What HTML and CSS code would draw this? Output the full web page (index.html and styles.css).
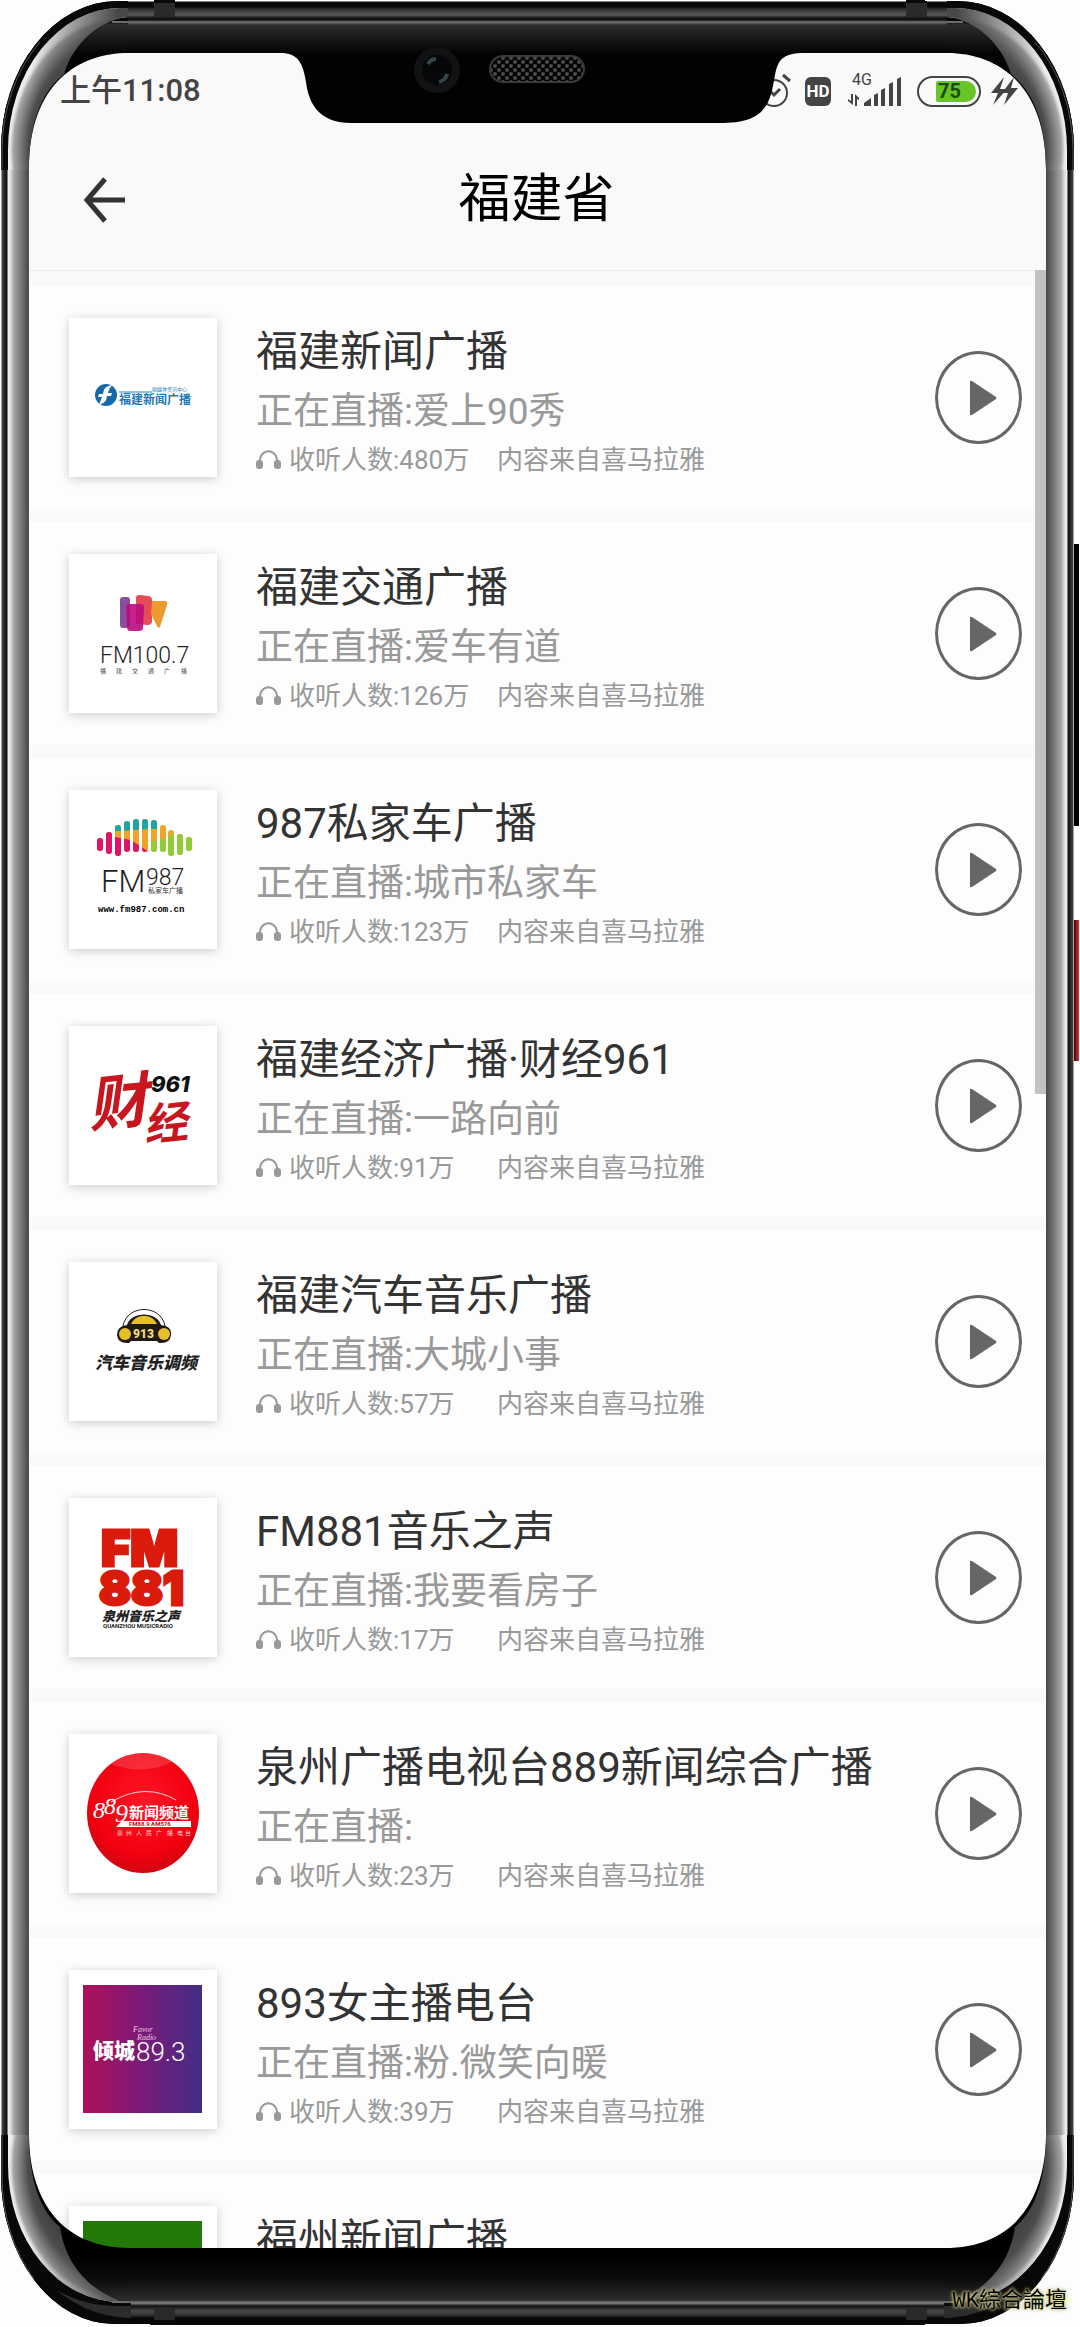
FILE: index.html
```html
<!DOCTYPE html>
<html lang="zh-CN">
<head>
    <meta charset="UTF-8">
    <meta name="viewport" content="width=device-width, initial-scale=1.0">
    <title>福建省</title>
    <link rel="stylesheet" href="styles.css">
</head>
<body>
    <!-- общие иконки -->
    <svg class="defs" width="0" height="0" aria-hidden="true">
        <defs>
            <radialGradient id="rail-top" gradientUnits="userSpaceOnUse" cx="0" cy="0" r="1" gradientTransform="translate(120 150) scale(112 135)">
                <stop offset="0.5" stop-color="#222"/>
                <stop offset="0.82" stop-color="#4c4c4c"/>
                <stop offset="0.95" stop-color="#a4a4a4"/>
                <stop offset="0.98" stop-color="#e4e4e4"/>
                <stop offset="1" stop-color="#f0f0f0"/>
            </radialGradient>
            <radialGradient id="rail-bottom" gradientUnits="userSpaceOnUse" cx="0" cy="0" r="1" gradientTransform="translate(120 30) scale(112 137)">
                <stop offset="0.5" stop-color="#222"/>
                <stop offset="0.82" stop-color="#4c4c4c"/>
                <stop offset="0.95" stop-color="#a4a4a4"/>
                <stop offset="0.98" stop-color="#e4e4e4"/>
                <stop offset="1" stop-color="#f0f0f0"/>
            </radialGradient>
            <linearGradient id="fade" gradientUnits="userSpaceOnUse" x1="30" y1="0" x2="118" y2="0">
                <stop offset="0" stop-color="#484848" stop-opacity="0"/>
                <stop offset="1" stop-color="#484848"/>
            </linearGradient>
            <linearGradient id="glass-top" gradientUnits="userSpaceOnUse" x1="0" y1="0" x2="0" y2="53">
                <stop offset="0.38" stop-color="#080808"/>
                <stop offset="0.47" stop-color="#2c2c2c"/>
                <stop offset="1" stop-color="#050505"/>
            </linearGradient>
            <linearGradient id="glass-bottom" gradientUnits="userSpaceOnUse" x1="0" y1="113" x2="0" y2="190">
                <stop offset="0.1" stop-color="#000"/>
                <stop offset="0.39" stop-color="#0a0a0a"/>
                <stop offset="0.68" stop-color="#2c2c2c"/>
                <stop offset="0.73" stop-color="#080808"/>
            </linearGradient>
            <linearGradient id="sunset">
                <stop offset="0" stop-color="#ad1159"/>
                <stop offset="0.5" stop-color="#7a1a79"/>
                <stop offset="1" stop-color="#422e86"/>
            </linearGradient>
            <radialGradient id="ball" cx="0.5" cy="0.4" r="0.65">
                <stop offset="0" stop-color="#ff1626"/>
                <stop offset="0.7" stop-color="#f2000f"/>
                <stop offset="1" stop-color="#c40812"/>
            </radialGradient>
        </defs>
        <symbol id="corner-top" viewBox="0 0 150 170">
            <path fill="#fdfdfd" d="M0 0H150V1H118A117 149 0 0 0 1 150V170H0Z"/>
            <path fill="url(#glass-top)" d="M128 1H118A117 149 0 0 0 1 150V170H29C29 82 80 53 128 53Z"/>
            <path fill="#080808" d="M118 1A117 149 0 0 0 1 150V170H8V150A112 135 0 0 1 120 15Z"/>
            <g id="crescent-top">
                <path fill="url(#rail-top)" d="M8 170V150A112 142 0 0 1 120 8H128V17C104 18 74 40 64 74C44 90 29 118 29 170Z"/>
                <path fill="url(#fade)" d="M8 170V150A112 142 0 0 1 120 8H128V17C104 18 74 40 64 74C44 90 29 118 29 170Z"/>
            </g>
            <path fill="none" stroke="#555" d="M2 170V150A116 148 0 0 1 40 42"/>
            <path fill="none" stroke="#6b6b6b" stroke-width="2" d="M128 22H112"/>
        </symbol>
        <symbol id="corner-bottom" viewBox="0 0 150 190">
            <path fill="#fdfdfd" d="M0 190H150V189H115A114 149 0 0 1 1 40V0H0Z"/>
            <path fill="url(#glass-bottom)" d="M131 189H115A114 149 0 0 1 1 40V0H29C29 50 50 113 131 113Z"/>
            <path fill="#080808" d="M115 189A114 149 0 0 1 1 40V0H8V30A112 137 0 0 0 120 167L131 171V189Z"/>
            <path fill="url(#rail-bottom)" d="M8 0V30A112 137 0 0 0 120 167C90 154 66 132 60 92C38 74 29 40 29 0Z"/>
            <path fill="url(#fade)" d="M8 0V30A112 137 0 0 0 120 167C90 154 66 132 60 92C38 74 29 40 29 0Z"/>
            <path fill="#2c2c2c" d="M131 171V183C100 182 78 172 56 155C80 168 100 172 131 171Z"/>
            <path fill="none" stroke="#555" d="M2 0V40A113 148 0 0 0 34 144"/>
            <path fill="none" stroke="#6b6b6b" stroke-width="2" d="M131 167H112"/>
        </symbol>
        <symbol id="headphones" viewBox="0 0 25 20">
            <path fill="none" stroke="#999" stroke-width="2" d="M4 14C2 -3 23 -3 21 14"/>
            <rect x="0" y="10" width="7" height="9" rx="3" fill="#999"/>
            <rect x="18" y="10" width="7" height="9" rx="3" fill="#999"/>
        </symbol>
        <symbol id="play" viewBox="0 0 28 36">
            <path fill="#666" d="M1 2Q1 0 3 1L27 17Q28 18 27 19L3 35Q1 36 1 34Z"/>
        </symbol>
    </svg>

    <div class="phone">
        <main class="screen">
            <div class="status-bar">
                <span class="time">上午11:08</span>
                <div class="status-icons">
                    <svg width="32" height="36" viewBox="0 0 32 36" fill="none" stroke="#444" stroke-width="2">
                        <circle cx="14" cy="20" r="13"/>
                        <path d="M8 16L14 22L20 16M23 2L30 8" stroke-width="3"/>
                    </svg>
                    <span class="hd">HD</span>
                    <div class="signal">
                        <span>4G</span>
                        <svg width="54" height="30" viewBox="0 0 54 30" fill="#444">
                            <path d="M3 18H5V29L0 25V23L3 25ZM7 30V18L11 22V24L9 23V30ZM16 30V27L23 22V30ZM26 30V19L30 17V30ZM33 30V14L37 12V30ZM41 30V8L45 6V30ZM49 30V3L53 1V30Z"/>
                        </svg>
                    </div>
                    <div class="battery"><span>75</span></div>
                    <svg width="28" height="28" viewBox="0 0 28 28" fill="#444">
                        <path d="M14 0L1 16H8L3 28L17 12H10ZM24 0L12 16H18L14 28L28 11H21Z"/>
                    </svg>
                </div>
            </div>

            <header class="header">
                <button class="back" aria-label="返回">
                    <svg width="42" height="46" viewBox="0 0 42 46" fill="none" stroke="#333" stroke-width="5">
                        <path d="M22 2L4 23L22 44M4 23H42"/>
                    </svg>
                </button>
                <h1>福建省</h1>
            </header>

            <ul class="list">
                <li class="station">
                    <svg class="cover" viewBox="0 0 148 159">
                        <ellipse cx="37" cy="77" rx="11" ry="11" fill="#1768a8"/>
                        <path fill="#fff" d="M44 67C34 68 35 73 34 76H30L29 79H33L30 87C39 84 37 80 38 78H42L43 75H39C40 71 41 69 44 67Z"/>
                        <text x="83" y="73" font-size="5" fill="#2b83bd">融媒体资讯中心</text>
                        <path stroke="#2b83bd" d="M50 74H83"/>
                        <text x="50" y="86" font-size="12" font-weight="700" fill="#1c78b6">福建新闻广播</text>
                    </svg>
                    <div class="info">
                        <h2>福建新闻广播</h2>
                        <p class="live">正在直播:爱上90秀</p>
                        <p class="meta"><svg width="25" height="20"><use href="#headphones"/></svg><span>收听人数:480万</span><span>内容来自喜马拉雅</span></p>
                    </div>
                    <button class="play" aria-label="播放"><svg width="28" height="36"><use href="#play"/></svg></button>
                </li>
                <li class="station">
                    <svg class="cover" viewBox="0 0 148 159">
                        <rect x="51" y="43" width="10" height="31" rx="3" fill="#85519c"/>
                        <path fill="#e64c58" d="M67 44Q67 41 70 41L80 42Q83 43 83 46V68Q82 71 79 71L67 70Z"/>
                        <path fill="#bd0a7e" fill-opacity="0.9" d="M57 53Q57 50 61 50H71Q75 50 75 53L74 74Q74 77 70 77H61Q58 77 58 73Z"/>
                        <path fill="#ec9a2d" d="M83 47H96Q99 47 98 51L91 73Q89 75 88 72L82 60Z"/>
                        <text x="31" y="109" font-size="23" font-weight="300" fill="#222">FM100.7</text>
                        <text x="31 47 63 79 95 112" y="119" font-size="6" fill="#444">福建交通广播</text>
                    </svg>
                    <div class="info">
                        <h2>福建交通广播</h2>
                        <p class="live">正在直播:爱车有道</p>
                        <p class="meta"><svg width="25" height="20"><use href="#headphones"/></svg><span>收听人数:126万</span><span>内容来自喜马拉雅</span></p>
                    </div>
                    <button class="play" aria-label="播放"><svg width="28" height="36"><use href="#play"/></svg></button>
                </li>
                <li class="station">
                    <svg class="cover" viewBox="0 0 148 159">
                        <clipPath id="bars">
                            <rect x="28" y="48" width="6" height="13" rx="3"/>
                            <rect x="37" y="42" width="6" height="22" rx="3"/>
                            <rect x="46" y="35" width="6" height="31" rx="3"/>
                            <rect x="55" y="31" width="6" height="31" rx="3"/>
                            <rect x="64" y="29" width="6" height="33" rx="3"/>
                            <rect x="73" y="29" width="6" height="33" rx="3"/>
                            <rect x="82" y="30" width="6" height="32" rx="3"/>
                            <rect x="91" y="35" width="6" height="27" rx="3"/>
                            <rect x="99" y="40" width="6" height="26" rx="3"/>
                            <rect x="108" y="44" width="6" height="21" rx="3"/>
                            <rect x="117" y="47" width="6" height="14" rx="3"/>
                        </clipPath>
                        <g clip-path="url(#bars)">
                            <rect x="28" y="28" width="96" height="40" fill="#f0a325"/>
                            <path fill="#1ba5a5" d="M45 28H90V39H80L50 41H45Z"/>
                            <path fill="#dd1469" d="M28 40H44L46 47L62 50L80 62V68H28Z"/>
                            <path fill="#91cb37" d="M81 52L98 48L107 42H124V68H81Z"/>
                        </g>
                        <text x="32" y="102" font-size="31" font-weight="300" fill="#222">FM</text>
                        <text x="77" y="95" font-size="23" font-weight="300" fill="#222">987</text>
                        <text x="79" y="103" font-size="7" fill="#333">私家车广播</text>
                        <text x="29" y="122" font-size="9" font-weight="700" font-family="Liberation Mono, monospace">www.fm987.com.cn</text>
                    </svg>
                    <div class="info">
                        <h2>987私家车广播</h2>
                        <p class="live">正在直播:城市私家车</p>
                        <p class="meta"><svg width="25" height="20"><use href="#headphones"/></svg><span>收听人数:123万</span><span>内容来自喜马拉雅</span></p>
                    </div>
                    <button class="play" aria-label="播放"><svg width="28" height="36"><use href="#play"/></svg></button>
                </li>
                <li class="station">
                    <svg class="cover" viewBox="0 0 148 159">
                        <text x="18" y="98" font-size="60" font-weight="700" font-style="italic" fill="#c8161f" transform="rotate(-6 48 74)">财</text>
                        <text x="74" y="113" font-size="44" font-weight="700" font-style="italic" fill="#c8161f" transform="rotate(-6 96 94)">经</text>
                        <text x="82" y="66" font-size="22" font-weight="800" font-style="italic" font-family="Inter, sans-serif" fill="#111">961</text>
                    </svg>
                    <div class="info">
                        <h2>福建经济广播·财经961</h2>
                        <p class="live">正在直播:一路向前</p>
                        <p class="meta"><svg width="25" height="20"><use href="#headphones"/></svg><span>收听人数:91万</span><span>内容来自喜马拉雅</span></p>
                    </div>
                    <button class="play" aria-label="播放"><svg width="28" height="36"><use href="#play"/></svg></button>
                </li>
                <li class="station">
                    <svg class="cover" viewBox="0 0 148 159">
                        <path fill="none" stroke="#222" d="M54 64C58 42 92 42 96 64"/>
                        <path fill="#201a12" d="M58 63C62 49 88 49 92 63Q103 64 102 73Q101 82 90 81L88 79H62L60 81Q49 82 48 73Q48 64 58 63Z"/>
                        <path fill="#e5bf2c" d="M62 62C67 51 83 51 88 62Z"/>
                        <circle cx="56" cy="72" r="6" fill="#e5bf2c"/>
                        <circle cx="95" cy="72" r="6" fill="#e5bf2c"/>
                        <text x="64" y="76" font-size="12" font-weight="900" fill="#f0dc7a">913</text>
                        <text x="26" y="107" font-size="17" font-weight="900" font-style="italic" fill="#222">汽车音乐调频</text>
                    </svg>
                    <div class="info">
                        <h2>福建汽车音乐广播</h2>
                        <p class="live">正在直播:大城小事</p>
                        <p class="meta"><svg width="25" height="20"><use href="#headphones"/></svg><span>收听人数:57万</span><span>内容来自喜马拉雅</span></p>
                    </div>
                    <button class="play" aria-label="播放"><svg width="28" height="36"><use href="#play"/></svg></button>
                </li>
                <li class="station">
                    <svg class="cover" viewBox="0 0 148 159">
                        <g font-family="Inter, sans-serif" font-weight="900" fill="#da1a0b" stroke="#da1a0b" stroke-width="3">
                            <text x="32" y="68" font-size="50">FM</text>
                            <text x="30" y="107" font-size="47">881</text>
                        </g>
                        <text x="33" y="123" font-size="13" font-weight="900" font-style="italic" fill="#222">泉州音乐之声</text>
                        <text x="34" y="130" font-size="6" font-weight="700" fill="#222">QUANZHOU MUSICRADIO</text>
                    </svg>
                    <div class="info">
                        <h2>FM881音乐之声</h2>
                        <p class="live">正在直播:我要看房子</p>
                        <p class="meta"><svg width="25" height="20"><use href="#headphones"/></svg><span>收听人数:17万</span><span>内容来自喜马拉雅</span></p>
                    </div>
                    <button class="play" aria-label="播放"><svg width="28" height="36"><use href="#play"/></svg></button>
                </li>
                <li class="station">
                    <svg class="cover" viewBox="0 0 148 159">
                        <ellipse cx="74" cy="79" rx="56" ry="60" fill="url(#ball)"/>
                        <path fill="#fff" fill-opacity="0.15" d="M42 30Q73 8 103 28Q74 42 42 30Z"/>
                        <path fill="none" stroke="#ffd0d0" d="M42 68Q76 48 107 66"/>
                        <g font-family="Liberation Serif, serif" font-style="italic" fill="#fff">
                            <text x="24" y="84" font-size="24">8</text>
                            <text x="35" y="80" font-size="24">8</text>
                            <text x="46" y="88" font-size="26">9</text>
                        </g>
                        <text x="60" y="84" font-size="15" font-weight="700" fill="#fff">新闻频道</text>
                        <path fill="#fff" d="M53 87H122V93H47Z"/>
                        <text x="60" y="92" font-size="6" font-weight="700" fill="#c40812">FM88.9 AM576</text>
                        <text x="48 57 67 77 87 98 108 116" y="101" font-size="6" fill="#ffd6d6">泉州人民广播电台</text>
                    </svg>
                    <div class="info">
                        <h2>泉州广播电视台889新闻综合广播</h2>
                        <p class="live">正在直播:</p>
                        <p class="meta"><svg width="25" height="20"><use href="#headphones"/></svg><span>收听人数:23万</span><span>内容来自喜马拉雅</span></p>
                    </div>
                    <button class="play" aria-label="播放"><svg width="28" height="36"><use href="#play"/></svg></button>
                </li>
                <li class="station">
                    <svg class="cover" viewBox="0 0 148 159">
                        <rect x="14" y="15" width="119" height="128" fill="url(#sunset)"/>
                        <text x="24" y="88" font-size="21" font-weight="900" fill="#fff">倾城</text>
                        <text x="67" y="91" font-size="26" font-weight="300" fill="#fff">89.3</text>
                        <g font-family="Liberation Serif, serif" font-style="italic" font-size="8" fill="#f0c8e4">
                            <text x="64" y="62">Favor</text>
                            <text x="68" y="70">Radio</text>
                        </g>
                    </svg>
                    <div class="info">
                        <h2>893女主播电台</h2>
                        <p class="live">正在直播:粉.微笑向暖</p>
                        <p class="meta"><svg width="25" height="20"><use href="#headphones"/></svg><span>收听人数:39万</span><span>内容来自喜马拉雅</span></p>
                    </div>
                    <button class="play" aria-label="播放"><svg width="28" height="36"><use href="#play"/></svg></button>
                </li>
                <li class="station">
                    <svg class="cover" viewBox="0 0 148 159">
                        <rect x="14" y="15" width="119" height="128" fill="#217a08"/>
                    </svg>
                    <div class="info">
                        <h2>福州新闻广播</h2>
                    </div>
                </li>
            </ul>
            <div class="scrollbar"></div>
        </main>

        <!-- корпус телефона -->
        <svg class="notch" width="524" height="72" viewBox="0 0 524 72">
            <path fill="#020202" d="M0 1V0H524V1C500 1 497 9 494 23C491 40 490 44 487 50C480 64 468 71 438 71H70C40 71 28 54 25 30C22 10 16 1 0 1Z"/>
            <circle cx="156" cy="18" r="23" fill="#101214"/>
            <circle cx="156" cy="18" r="15" fill="#050708"/>
            <path fill="none" stroke="#34454a" stroke-width="4" d="M147 12Q150 7 155 7M158 30Q165 28 166 22"/>
            <pattern id="mesh" width="8" height="8" patternUnits="userSpaceOnUse">
                <circle cx="2" cy="2" r="2" fill="#4a4a4a"/>
                <circle cx="6" cy="6" r="2" fill="#4a4a4a"/>
            </pattern>
            <rect x="209" y="4" width="94" height="26" rx="13" fill="url(#mesh)" stroke="#3a3a3a" stroke-width="2"/>
        </svg>
        <i class="antenna top left"></i>
        <i class="antenna top right"></i>
        <i class="antenna bottom left"></i>
        <i class="antenna bottom right"></i>
        <svg class="corner top left" width="150" height="170"><use href="#corner-top"/></svg>
        <svg class="corner top right" width="150" height="170"><use href="#corner-top"/></svg>
        <svg class="corner bottom left" width="150" height="190"><use href="#corner-bottom"/></svg>
        <svg class="corner bottom right" width="150" height="190"><use href="#corner-bottom"/></svg>
        <i class="side-key volume"></i>
        <i class="side-key power"></i>
    </div>
    <div class="watermark">WK綜合論壇</div>
</body>
</html>
```
FILE: styles.css
```css
* {
    box-sizing: border-box;
}
body {
    position: relative;
    background-color: #fdfdfd;
    color: #333;
    font-family: Roboto, "Noto Sans CJK SC", sans-serif;
    height: 100vh;
    margin: 0;
    padding: 0 5px 2px 0;
    overflow: hidden;
}
.defs {
    position: absolute;
}
h1, h2, p, ul {
    margin: 0;
    padding: 0;
    font-weight: 400;
}
button {
    background: none;
    border: none;
    padding: 0;
    cursor: pointer;
}
.phone {
    position: relative;
    height: 100%;
    padding: 53px 29px 77px;
    display: flex;
    flex-direction: column;
    background:
        linear-gradient(#fdfdfd 1px, #080808 2px, #080808 7px, #303030 9px, #5a5a5a 15px, #111 18px, #111 20px, #777 22px, #2c2c2c 25px, #050505 52px) top / calc(100% - 240px) 53px no-repeat,
        linear-gradient(#000 8px, #0a0a0a 30px, #2c2c2c 52px, #858585 55px, #111 58px, #484848 63px, #333 67px, #050505 70px) bottom / calc(100% - 240px) 77px no-repeat,
        linear-gradient(90deg, #fdfdfd 1px, #444 2px, #0c0c0c 7px, #f0f0f0 8px, #e4e4e4 10px, #a4a4a4 14px, #4c4c4c 28px) left / 29px 100% no-repeat,
        linear-gradient(-90deg, #fdfdfd 1px, #444 2px, #0c0c0c 7px, #f0f0f0 8px, #e4e4e4 10px, #a4a4a4 14px, #4c4c4c 28px) right / 29px 100% no-repeat;
}
.screen {
    position: relative;
    flex: 1;
    min-height: 0;
    overflow: hidden;
    background-color: #f9f9f9;
}

/* Строка состояния */
.status-bar {
    display: flex;
    justify-content: space-between;
    align-items: center;
    height: 76px;
    padding: 0 28px 0 31px;
    color: #444;
}
.time {
    font-size: 31px;
    line-height: 40px;
    font-weight: 500;
}
.status-icons {
    display: flex;
    align-items: center;
}
.hd {
    width: 26px;
    height: 29px;
    margin: 0 17px 0 13px;
    border-radius: 6px;
    background-color: #444;
    color: #fff;
    font-size: 17px;
    font-weight: 700;
    line-height: 29px;
    text-align: center;
}
.signal {
    position: relative;
    height: 30px;
    margin-right: 15px;
}
.signal span {
    position: absolute;
    top: -4px;
    left: 4px;
    font-size: 16px;
    line-height: 16px;
}
.battery {
    width: 64px;
    height: 31px;
    margin-right: 9px;
    padding: 3px 3px 3px 17px;
    border: 2px solid #444;
    border-radius: 16px;
}
.battery span {
    display: block;
    height: 21px;
    padding-left: 2px;
    border-radius: 2px 11px 11px 2px;
    background-color: #67c528;
    color: #1d4a0c;
    font-size: 20px;
    font-weight: 700;
    line-height: 21px;
}

/* Шапка */
.header {
    display: grid;
    grid-template-columns: 96px 1fr 98px;
    align-items: center;
    height: 142px;
    border-bottom: 1px solid #ececec;
}
.back {
    justify-self: end;
}
.back svg {
    display: block;
}
.header h1 {
    color: #000;
    font-size: 52px;
    line-height: 60px;
    text-align: center;
}

/* Список станций */
.list {
    list-style: none;
    padding-top: 15px;
}
.station {
    display: flex;
    align-items: center;
    height: 223px;
    margin-bottom: 13px;
    padding: 0 24px 0 40px;
    background-color: #fdfdfd;
}
.cover {
    flex: none;
    width: 148px;
    height: 159px;
    background-color: #fff;
    box-shadow: 0 2px 10px rgba(0, 0, 0, 0.2);
}
.info {
    flex: 1;
    height: 156px;
    margin-left: 39px;
    white-space: nowrap;
}
.info h2 {
    font-size: 42px;
    line-height: 64px;
}
.live {
    color: #999;
    font-size: 37px;
    line-height: 56px;
}
.meta {
    display: grid;
    grid-template-columns: 33px 208px 1fr;
    align-items: center;
    color: #999;
    font-size: 26px;
    line-height: 40px;
}
.play {
    flex: none;
    display: flex;
    align-items: center;
    justify-content: center;
    width: 87px;
    height: 93px;
    padding-left: 8px;
    border: 3px solid #666;
    border-radius: 50%;
}
.scrollbar {
    position: absolute;
    top: 217px;
    right: 0;
    width: 11px;
    height: 824px;
    background-color: #c2c2c2;
}

/* Корпус */
.notch {
    position: absolute;
    top: 52px;
    left: 50%;
    margin-left: -257px;
    overflow: visible;
}
.corner {
    position: absolute;
}
.top {
    top: 0;
}
.bottom {
    bottom: 0;
}
.corner.left {
    left: 0;
}
.corner.right {
    right: 0;
    transform: scaleX(-1);
}
.antenna {
    position: absolute;
    width: 21px;
    height: 17px;
    background-color: #2a2a2a;
    border: 0 solid #080808;
}
.antenna.top {
    border-top-width: 3px;
}
.antenna.bottom {
    border-bottom-width: 5px;
}
.antenna.left {
    left: 154px;
}
.antenna.right {
    right: 148px;
}
.side-key {
    position: absolute;
    right: -4px;
    width: 5px;
}
.volume {
    top: 544px;
    height: 282px;
    background-color: #000;
}
.power {
    top: 920px;
    height: 141px;
    background: linear-gradient(90deg, #400, #d23a40);
}
.watermark {
    position: absolute;
    right: 13px;
    bottom: 12px;
    color: #000;
    font-family: "Liberation Mono", "Noto Sans CJK TC", monospace;
    font-size: 22px;
    line-height: 26px;
    text-shadow: 0 0 2px #d8d89a, 0 0 3px #d8d89a, 0 0 5px #a8a868;
}
```
